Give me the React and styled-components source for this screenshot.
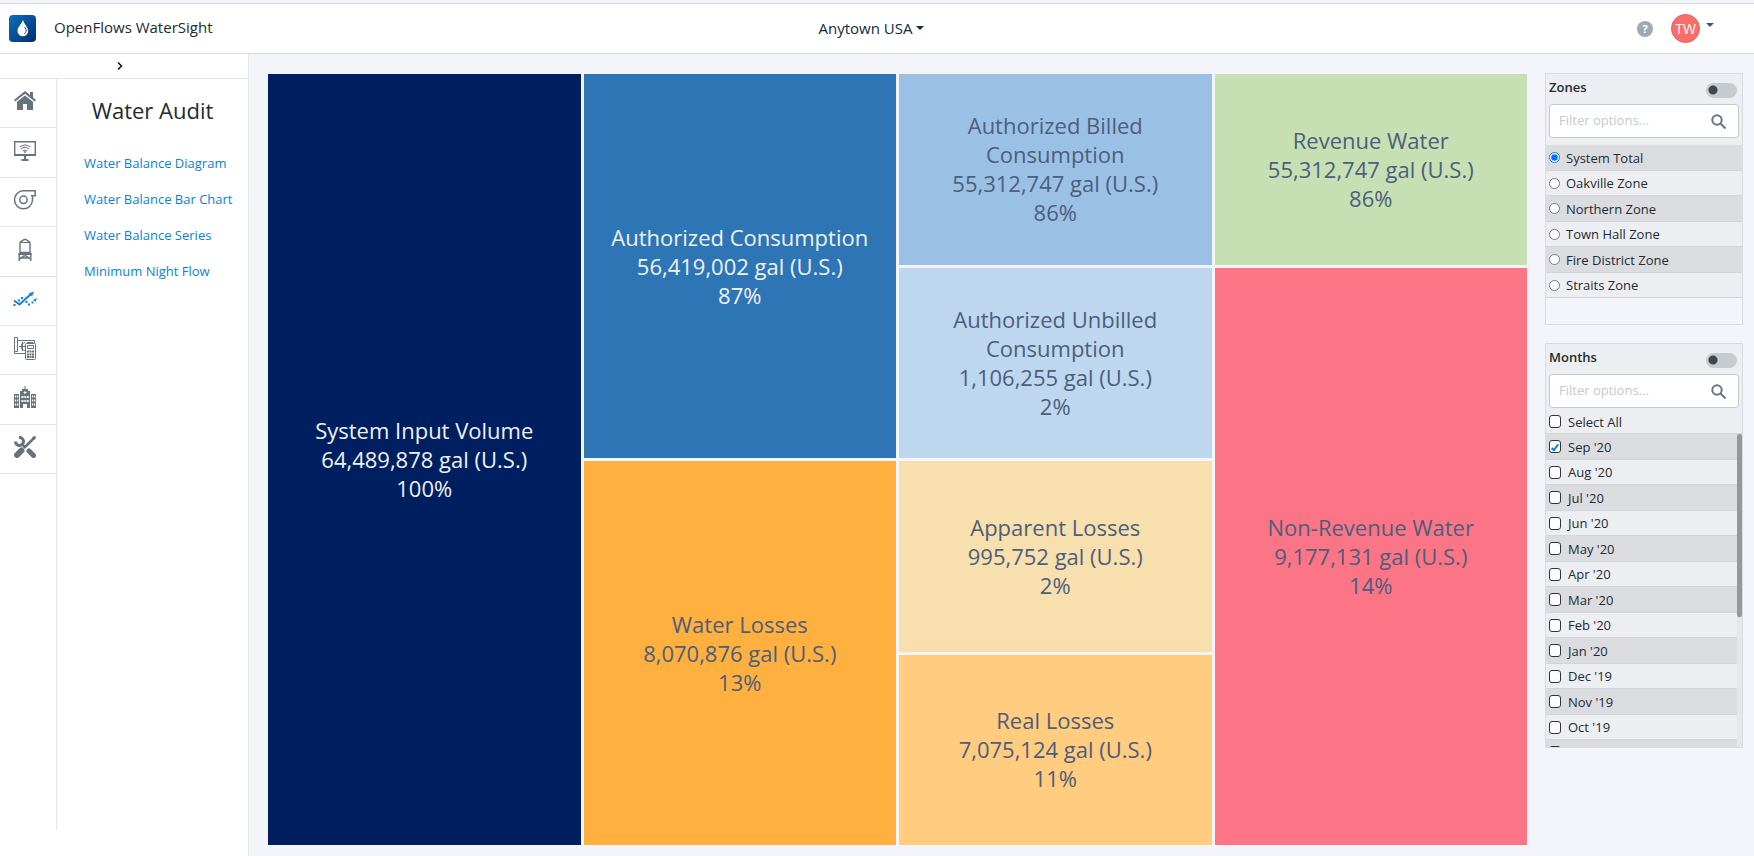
import React, { useState } from "react";
import styled, { createGlobalStyle } from "styled-components";

const GlobalStyle = createGlobalStyle`
  * {
    box-sizing: border-box;
  }

  body {
    margin: 0;
    background: #f4f5fa;
    color: #222b33;
    font-family: "Open Sans", "Noto Sans", sans-serif;
    font-size: 13px;
  }

  button, input {
    font-family: inherit;
  }
`;

const Page = styled.div`
  display: flex;
  flex-direction: column;
  min-height: 100vh;
`;

const Header = styled.header`
  display: grid;
  grid-template-columns: 1fr auto 1fr;
  align-items: center;
  height: 51px;
  margin-top: 3px;
  padding: 0 20px 0 9px;
  background: #fff;
  border-top: 1px solid #d6dade;
  border-bottom: 1px solid #d6dade;
`;

const Brand = styled.div`
  display: flex;
  align-items: center;
  gap: 18px;
`;

const BrandName = styled.span`
  padding-bottom: 3px;
  font-size: 15px;
  line-height: 20px;
`;

const LocationButton = styled.button`
  display: flex;
  align-items: center;
  gap: 4px;
  padding: 0 0 2px;
  border: none;
  background: none;
  color: #0f2b3f;
  font-size: 15px;
  line-height: 20px;
  cursor: pointer;
`;

const Caret = styled.span`
  border: ${(props) => props.$size}px solid transparent;
  border-top-color: currentColor;
  border-bottom: 0;
`;

const UserArea = styled.div`
  display: flex;
  align-items: center;
  justify-content: flex-end;
  gap: 18px;
  padding-right: 20px;
`;

const HelpButton = styled.button`
  width: 16px;
  height: 16px;
  padding: 0;
  border: none;
  border-radius: 50%;
  background: #9fa9b0;
  color: #fff;
  font-size: 11px;
  font-weight: 700;
  line-height: 16px;
`;

const UserButton = styled.button`
  display: flex;
  gap: 6px;
  padding: 0;
  border: none;
  background: none;
  color: #44546f;
  cursor: pointer;

  ${Caret} {
    margin-top: 9px;
  }
`;

const Avatar = styled.span`
  width: 29px;
  height: 29px;
  border: 1px solid #e4605e;
  border-radius: 50%;
  background: #fa6e6a;
  color: #fff;
  font-size: 14px;
  line-height: 28px;
  text-align: center;
`;

const Body = styled.div`
  display: flex;
  flex: 1;
`;

const Sidebar = styled.aside`
  display: flex;
  flex-direction: column;
  width: 249px;
  flex-shrink: 0;
  background: #fff;
  border-right: 1px solid #e3e5ea;
`;

const ExpandButton = styled.button`
  display: flex;
  align-items: center;
  justify-content: center;
  height: 25px;
  padding: 0 8px 0 0;
  border: none;
  border-bottom: 1px solid #e3e5ea;
  background: none;
  color: #111;
`;

const SidebarContent = styled.div`
  display: flex;
  flex: 1;
`;

const IconRail = styled.nav`
  width: 57px;
  margin-bottom: 26px;
  border-right: 1px solid #e3e5ea;
`;

const RailItems = styled.div`
  display: grid;
  grid-template-rows: repeat(8, 1fr);
  height: 395px;
`;

const RailButton = styled.button`
  display: flex;
  align-items: center;
  justify-content: center;
  padding: 0 7px 4px 0;
  border: none;
  border-bottom: 1px solid #e3e5ea;
  background: none;
  color: ${(props) => (props.$active ? "#0d84e0" : "#66727d")};
  cursor: pointer;
`;

const Menu = styled.nav`
  flex: 1;
  padding-top: 16px;
`;

const MenuTitle = styled.h1`
  margin: 0 0 20px;
  color: #222b33;
  font-size: 22px;
  font-weight: 400;
  line-height: 30px;
  text-align: center;
`;

const MenuLink = styled.a`
  display: block;
  padding-left: 27px;
  color: #0a7fdb;
  font-size: 13px;
  line-height: 36px;
  text-decoration: none;
`;

const Main = styled.main`
  display: flex;
  flex: 1;
  gap: 18px;
  padding: 19px 11px 11px 19px;
`;

const Diagram = styled.section`
  display: grid;
  flex: 1;
  grid-template-columns: repeat(4, 1fr);
  grid-template-rows: repeat(4, 1fr);
  gap: 3px;
  margin-top: 1px;
`;

const Block = styled.div`
  display: flex;
  flex-direction: column;
  align-items: center;
  justify-content: center;
  grid-column: ${(props) => props.$column};
  grid-row: ${(props) => props.$row};
  padding: 0 20px;
  background: ${(props) => props.$color};
  color: ${(props) => (props.$light ? "#eef1f5" : "#4d5e7c")};
  font-size: 22px;
  line-height: 29px;
  text-align: center;
`;

const Filters = styled.aside`
  display: flex;
  flex-direction: column;
  gap: 18px;
  width: 198px;
  flex-shrink: 0;
`;

const Card = styled.section`
  height: ${(props) => props.$height}px;
  overflow: hidden;
  border: 1px solid #d8dbe0;
`;

const CardHead = styled.div`
  display: flex;
  flex-direction: column;
  gap: 3px;
  height: ${(props) => (props.$compact ? 66 : 71)}px;
  padding: 3px 3px 0;
  background: #edeef2;
`;

const CardTitle = styled.div`
  display: flex;
  align-items: flex-start;
  justify-content: space-between;
  height: 24px;
  padding-right: 2px;
`;

const TitleText = styled.h2`
  margin: 0;
  font-size: 13px;
  font-weight: 600;
  line-height: 20px;
`;

const Toggle = styled.input`
  appearance: none;
  width: 31px;
  height: 15px;
  margin: 6px 0 0;
  border-radius: 8px;
  background: radial-gradient(circle at 7px 7px, #3e464e 4px, transparent 5px) #c6cbce;
`;

const SearchBox = styled.label`
  display: flex;
  align-items: center;
  height: 34px;
  padding: 0 12px 0 9px;
  border: 1px solid #c5cace;
  border-radius: 3px;
  background: #fff;
  color: #697580;
`;

const SearchInput = styled.input`
  flex: 1;
  min-width: 0;
  padding: 0 0 2px;
  border: none;
  outline: none;
  background: none;
  font-size: 13px;

  &::placeholder {
    color: #c3c9cf;
  }
`;

const ScrollArea = styled.div`
  display: flex;
  height: 313px;
`;

const OptionList = styled.div`
  flex: 1;
  overflow-y: auto;
  scrollbar-width: none;
`;

const ScrollTrack = styled.div`
  width: 5px;
  background: #e6e7eb;
`;

const ScrollThumb = styled.div`
  height: 183px;
  border-radius: 2px;
  background: #96979a;
`;

const Option = styled.label`
  display: flex;
  align-items: center;
  gap: ${(props) => (props.$wide ? 7 : 6)}px;
  height: ${(props) => (props.$shaded ? 26 : 25)}px;
  padding-left: 3px;
  border-bottom: 1px solid #d2d5d9;
  background: ${(props) => (props.$shaded ? "#dbdce0" : "#edeef2")};
  font-size: 13px;
  line-height: 20px;
`;

const SelectAll = styled(Option)`
  height: 24px;
`;

const Radio = styled.input`
  width: 11px;
  height: 11px;
  margin: 0;
`;

const Checkbox = styled.input`
  display: grid;
  place-items: center;
  appearance: none;
  width: 12px;
  height: 13px;
  margin: 0;
  border: 1px solid #333;
  border-radius: 3px;
  background: #fff;

  &:checked::before {
    content: "";
    width: 2px;
    height: 6px;
    border: solid #0d84e0;
    border-width: 0 2px 2px 0;
    transform: rotate(38deg);
  }
`;

const Logo = () => (
  <svg width="27" height="27" viewBox="0 0 27 27" aria-hidden="true">
    <defs>
      <linearGradient id="logo" x1="0" y1="0" x2="1" y2="1">
        <stop offset="0" stopColor="#0872bd" />
        <stop offset="1" stopColor="#052c6b" />
      </linearGradient>
    </defs>
    <rect width="27" height="27" rx="4" fill="url(#logo)" />
    <path d="M14 5C12 10 8.500 12 8.500 16a5.300 5.300 0 0 0 10.600 0C19.100 12 15.500 10 14 5z" fill="#fff" />
    <path d="M15.500 12c2.500 3 2 5-.5 7" fill="none" stroke="#0a4a8d" />
  </svg>
);

const HomeIcon = () => (
  <svg width="22" height="20" viewBox="0 0 22 20" fill="currentColor">
    <path d="M11 0 0 9l1.200 1.500L11 2.800l9.800 7.700L22 9l-3-2.500V1h-3v3z" />
    <path d="m11 4.500-8 6.300V19h6v-6h4v6h6v-8.200z" />
  </svg>
);

const MonitorIcon = () => (
  <svg width="22" height="20" viewBox="0 0 22 20" fill="none" stroke="currentColor">
    <path d="M.7.700h20.600v13H.7z" strokeWidth="1.400" />
    <path d="M0 14h22M11 14v5M7.500 19h7" strokeWidth="2" />
    <path d="M5.500 6q5.500-4 11 0M7 8q4-3.500 8 0M9 10q2-2 4 0" />
    <circle cx="11" cy="11" r=".6" />
  </svg>
);

const PumpIcon = () => (
  <svg width="22" height="20" viewBox="0 0 22 20" fill="none" stroke="currentColor" strokeWidth="1.500">
    <path d="M21.200.8H9.500A9 9 0 1 0 18.500 9.800V5.800h2.700zM17 5.800h1.500" />
    <circle cx="9.500" cy="9.800" r="3.700" />
  </svg>
);

const TankIcon = () => (
  <svg width="14" height="23" viewBox="0 0 14 23" fill="none" stroke="currentColor" strokeWidth="1.400">
    <path d="M2 14.500V5q0-1.500 2-2l2-1.500h2L10 3q2 .5 2 2v9.500z" />
    <path d="M2 4.500h10" strokeWidth="1" />
    <path d="M.5 16h13" strokeWidth="2" />
    <path d="M1.200 15v8M12.800 15v8M2 21l3.500-3h3l3.500 3M2 20h10" />
  </svg>
);

const TrendIcon = () => (
  <svg width="24" height="16" viewBox="0 0 24 16" fill="none" stroke="currentColor">
    <path d="m1 9.500 5.500 4L18 3" strokeWidth="2" />
    <path d="m15.500 2.500 5.500-2-2 5z" fill="currentColor" stroke="none" />
    <path d="m20 9 4-2-1.500 4z" fill="currentColor" stroke="none" />
    <path d="M.5 14h2M5 9.500h2M8 7h2M12.500 11h2M15 13.500h2M18.500 11.500h2" strokeWidth="2" />
  </svg>
);

const CalculatorIcon = () => (
  <svg width="22" height="23" viewBox="0 0 22 23" fill="none" stroke="currentColor">
    <path d="M.5.500h3v14h-3zM3.500 3.500h17V6M.5 14.500v2h11M8.500 5v9M5 9.500h6" />
    <path d="M11 5.500a4 4 0 1 0 0 8M13 5.500h6" />
    <rect x="11.500" y="6.500" width="10" height="16" rx="1" fill="#fff" />
    <path d="M13.500 8.500h6v3h-6z" />
    <path d="M13 14.500h7M13 17.500h7M13 20h7" strokeWidth="2" strokeDasharray="2 .5" />
  </svg>
);

const BuildingIcon = () => (
  <svg width="22" height="22" viewBox="0 0 22 22" fill="currentColor">
    <path d="M10.500 0h1v3h-1zM8 3h6v2h2v17h-3v-4H9v4H6V5h2zM0 8h5v14H0zM17 8h5v14h-5z" />
    <path
      d="M9.500 6.500h3M11 5v3"
      stroke="#fff"
    />
    <path
      d="M7.500 11h2M10.300 11h1.500M12.700 11h2M7.500 15h2M10.300 15h1.500M12.700 15h2M1 10.500h1.200M3 10.500h1.200M1 14.500h1.200M3 14.500h1.200M1 18.500h1.200M3 18.500h1.200M18 10.500h1.200M20 10.500h1.200M18 14.500h1.200M20 14.500h1.200M18 18.500h1.200M20 18.500h1.200"
      stroke="#fff"
      strokeWidth="2"
    />
  </svg>
);

const ToolsIcon = () => (
  <svg width="22" height="22" viewBox="0 0 22 22" fill="none" stroke="currentColor">
    <path d="m20 2-10 10" strokeWidth="2.500" />
    <path d="m18 1 3-1 1 1-1 3z" fill="currentColor" stroke="none" />
    <path d="m7.500 14.500-4.500 4.500" strokeWidth="6" strokeLinecap="round" />
    <path d="M5 1.500a4 4 0 1 1-3.500 4M8 8l3 3" strokeWidth="3" />
    <path d="m15 15 4.500 4.500" strokeWidth="5" strokeLinecap="round" />
  </svg>
);

const SearchIcon = () => (
  <svg width="15" height="15" viewBox="0 0 15 15" fill="none" stroke="currentColor" strokeWidth="2">
    <circle cx="6" cy="6" r="4.700" />
    <path d="m9.500 9.500 5 5" />
  </svg>
);

const railItems = [
  { label: "Home", Icon: HomeIcon },
  { label: "Monitoring", Icon: MonitorIcon },
  { label: "Pumps", Icon: PumpIcon },
  { label: "Tanks", Icon: TankIcon },
  { label: "Water Audit", Icon: TrendIcon, active: true },
  { label: "Costs", Icon: CalculatorIcon },
  { label: "Buildings", Icon: BuildingIcon },
  { label: "Settings", Icon: ToolsIcon },
];

const menuItems = ["Water Balance Diagram", "Water Balance Bar Chart", "Water Balance Series", "Minimum Night Flow"];

const blocks = [
  { name: "System Input Volume", volume: "64,489,878", percent: 100, color: "#001f60", column: 1, row: "1 / 5", light: true },
  { name: "Authorized Consumption", volume: "56,419,002", percent: 87, color: "#2e75b6", column: 2, row: "1 / 3", light: true },
  { name: "Water Losses", volume: "8,070,876", percent: 13, color: "#ffb03f", column: 2, row: "3 / 5" },
  { name: "Authorized Billed Consumption", volume: "55,312,747", percent: 86, color: "#9bc0e6", column: 3, row: "1" },
  { name: "Authorized Unbilled Consumption", volume: "1,106,255", percent: 2, color: "#bdd7ee", column: 3, row: "2" },
  { name: "Apparent Losses", volume: "995,752", percent: 2, color: "#f7dfae", column: 3, row: "3" },
  { name: "Real Losses", volume: "7,075,124", percent: 11, color: "#ffcc80", column: 3, row: "4" },
  { name: "Revenue Water", volume: "55,312,747", percent: 86, color: "#c6e0b4", column: 4, row: "1" },
  { name: "Non-Revenue Water", volume: "9,177,131", percent: 14, color: "#fc7586", column: 4, row: "2 / 5" },
];

const zones = ["System Total", "Oakville Zone", "Northern Zone", "Town Hall Zone", "Fire District Zone", "Straits Zone"];

const months = [
  "Sep '20", "Aug '20", "Jul '20", "Jun '20", "May '20", "Apr '20", "Mar '20", "Feb '20", "Jan '20", "Dec '19",
  "Nov '19", "Oct '19", "Sep '19", "Aug '19", "Jul '19", "Jun '19", "May '19", "Apr '19", "Mar '19", "Feb '19", "Jan '19",
];

const FilterHead = ({ title, compact }) => (
  <CardHead $compact={compact}>
    <CardTitle>
      <TitleText>{title}</TitleText>
      <Toggle type="checkbox" role="switch" aria-label={`${title} multiple selection`} />
    </CardTitle>
    <SearchBox>
      <SearchInput type="text" placeholder="Filter options..." aria-label={`Filter ${title}`} />
      <SearchIcon />
    </SearchBox>
  </CardHead>
);

const App = () => {
  const [zone, setZone] = useState("System Total");
  const [selected, setSelected] = useState(["Sep '20"]);
  const [thumbTop, setThumbTop] = useState(0);

  const toggleMonth = (month) => {
    setSelected(selected.includes(month) ? selected.filter((m) => m !== month) : [...selected, month]);
  };

  const handleScroll = (e) => {
    const { scrollTop, scrollHeight, clientHeight } = e.currentTarget;
    setThumbTop((scrollTop / scrollHeight) * clientHeight);
  };

  const allSelected = selected.length === months.length;

  return (
    <Page>
      <GlobalStyle />
      <Header>
        <Brand>
          <Logo />
          <BrandName>OpenFlows WaterSight</BrandName>
        </Brand>
        <LocationButton>
          Anytown USA <Caret $size={4} />
        </LocationButton>
        <UserArea>
          <HelpButton aria-label="Help">?</HelpButton>
          <UserButton>
            <Avatar>TW</Avatar>
            <Caret $size={4} />
          </UserButton>
        </UserArea>
      </Header>
      <Body>
        <Sidebar>
          <ExpandButton aria-label="Expand">
            <svg width="6" height="8" viewBox="0 0 6 8" fill="none" stroke="currentColor" strokeWidth="1.500">
              <path d="m1 .5 3.500 3.500L1 7.500" />
            </svg>
          </ExpandButton>
          <SidebarContent>
            <IconRail>
              <RailItems>
                {railItems.map(({ label, Icon, active }) => (
                  <RailButton key={label} aria-label={label} $active={active}>
                    <Icon />
                  </RailButton>
                ))}
              </RailItems>
            </IconRail>
            <Menu>
              <MenuTitle>Water Audit</MenuTitle>
              {menuItems.map((item) => (
                <MenuLink key={item} href="#">{item}</MenuLink>
              ))}
            </Menu>
          </SidebarContent>
        </Sidebar>
        <Main>
          <Diagram>
            {blocks.map((block) => (
              <Block key={block.name} $column={block.column} $row={block.row} $color={block.color} $light={block.light}>
                <span>{block.name}</span>
                <span>{block.volume} gal (U.S.)</span>
                <span>{block.percent}%</span>
              </Block>
            ))}
          </Diagram>
          <Filters>
            <Card $height={252}>
              <FilterHead title="Zones" />
              <OptionList>
                {zones.map((name, index) => (
                  <Option key={name} $shaded={index % 2 === 0}>
                    <Radio type="radio" name="zone" checked={zone === name} onChange={() => setZone(name)} />
                    {name}
                  </Option>
                ))}
              </OptionList>
            </Card>
            <Card $height={405}>
              <FilterHead title="Months" compact />
              <SelectAll $wide>
                <Checkbox type="checkbox" checked={allSelected} onChange={() => setSelected(allSelected ? [] : months)} />
                Select All
              </SelectAll>
              <ScrollArea>
                <OptionList onScroll={handleScroll}>
                  {months.map((month, index) => (
                    <Option key={month} $wide $shaded={index % 2 === 0}>
                      <Checkbox type="checkbox" checked={selected.includes(month)} onChange={() => toggleMonth(month)} />
                      {month}
                    </Option>
                  ))}
                </OptionList>
                <ScrollTrack>
                  <ScrollThumb style={{ marginTop: thumbTop }} />
                </ScrollTrack>
              </ScrollArea>
            </Card>
          </Filters>
        </Main>
      </Body>
    </Page>
  );
};

export default App;
